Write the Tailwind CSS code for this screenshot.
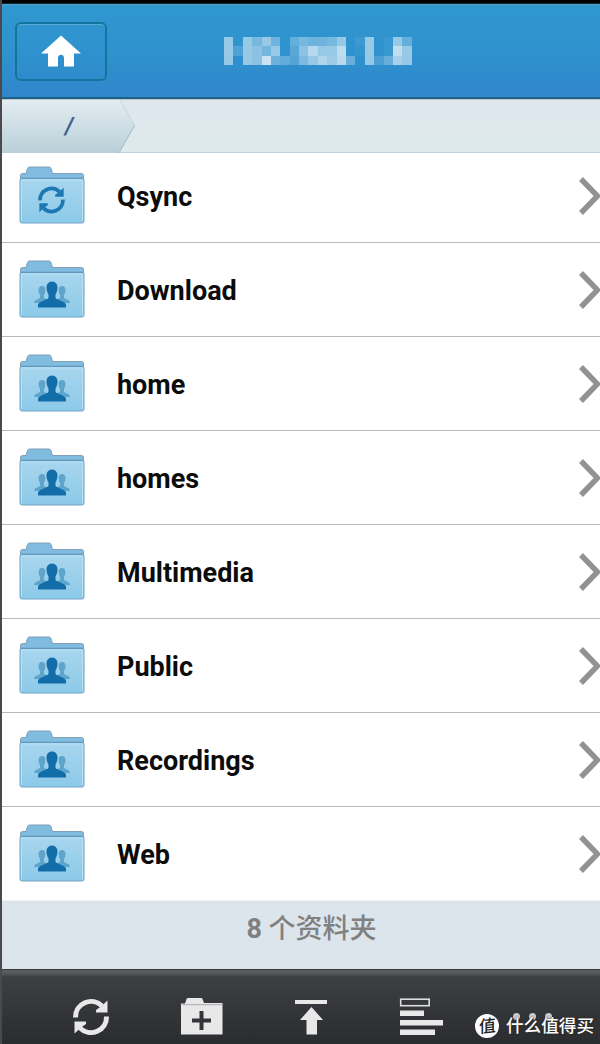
<!DOCTYPE html>
<html lang="zh-CN">
  <head>
    <meta charset="UTF-8" />
    <meta name="viewport" content="width=device-width, initial-scale=1.0" />
    <title>Files</title>
    <script src="https://cdn.jsdelivr.net/npm/@tailwindcss/browser@4"></script>
  </head>
  <body
    class="h-[1044px] w-[600px] overflow-hidden bg-[#4a4a4c] pl-[2px] font-['Roboto','Noto_Sans_CJK_SC',sans-serif]">
    <!-- Shared icon shapes -->
    <svg class="absolute h-0 w-0" aria-hidden="true">
      <defs>
        <linearGradient id="folder-front" x1="0" y1="0" x2="0" y2="1">
          <stop offset="0" stop-color="#a9d6ee" />
          <stop offset="1" stop-color="#8bcae9" />
        </linearGradient>
        <linearGradient id="crumb-fill" x1="0" y1="0" x2="0" y2="1">
          <stop offset="0" stop-color="#e2ecf0" />
          <stop offset="1" stop-color="#b9d0d9" />
        </linearGradient>
      </defs>
      <symbol id="folder" viewBox="0 0 66 58">
        <path
          d="M1.5 12V9.5Q1.5 7.5 3.5 7.5H7L8.5 2.5Q9 1 10.500 1H30Q31.500 1 32 2.500L33.500 7.500H62.500Q64.500 7.500 64.500 9.500V14H1.500Z"
          fill="#80bce0" stroke="#7f9fb8" stroke-width="1" />
        <rect x="1" y="12" width="64" height="45" rx="2" fill="url(#folder-front)" stroke="#74a4c4" />
        <path d="M2 12.500H64" stroke="#6198c0" stroke-width="1.200" />
        <path d="M2.500 55V14H63.500V55" fill="none" stroke="#b9dff2" stroke-width="1" />
      </symbol>
      <symbol id="people" viewBox="0 0 38 28">
        <g fill="#5fa4cb">
          <path d="M9 5C11.500 5 12.500 7 12.300 9.500C12.100 12 11.500 13 11 14V17L15 19V22H1L2 19.500L7 17V14C6 12.500 5.500 11 5.500 9.500C5.500 7 6.500 5 9 5Z" />
          <path d="M29 5C26.500 5 25.500 7 25.700 9.500C25.900 12 26.500 13 27 14V17L23 19V22H37L36 19.500L31 17V14C32 12.500 32.500 11 32.500 9.500C32.500 7 31.500 5 29 5Z" />
        </g>
        <path
          d="M19 0.500C22.700 0.500 24.700 3.500 24.500 7C24.300 10.500 23 12.500 22.500 13.500V17C24 19 31.500 20 33 23.500V26.500H5V23.500C6.500 20 14 19 15.500 17V13.500C15 12.500 13.700 10.500 13.500 7C13.300 3.500 15.300 0.500 19 0.500Z"
          fill="#136da8" />
      </symbol>
      <symbol id="sync" viewBox="0 0 38 38">
        <g fill="none" stroke="currentColor" stroke-width="5">
          <path d="M3.500 19.500A15.500 15.500 0 0 1 30 8" />
          <path d="M34.500 18.500A15.500 15.500 0 0 1 8 30" />
        </g>
        <path d="M35.500 2.500V14.500H24V12L29 8.500Z" fill="currentColor" />
        <path d="M2.500 35.500V23.500H14V26L9 29.500Z" fill="currentColor" />
      </symbol>
    </svg>

    <div class="flex h-full flex-col">
      <!-- Title bar -->
      <div class="h-1 shrink-0 border-b border-[#142d38] bg-black"></div>
      <header
        class="relative flex h-[95px] shrink-0 items-start border-t-2 border-b-2 border-t-[#4699c2] border-b-[#1a6587] bg-linear-to-b from-[#2f97cf] via-[#2f92ce] to-[#3086ca] pt-[16px] pl-[13px]">
        <button
          class="flex h-[59px] w-[92px] items-center justify-center rounded-md border-2 border-[#12759f] shadow-[inset_0_1px_0_#55a9d2]">
          <svg width="40" height="32" viewBox="0 0 40 32" class="-mt-px" fill="white">
            <path d="M20 0.500L40 18.500H33V31.500H23V23C23 18.800 17 18.800 17 23V31.500H7V18.500H0Z" />
          </svg>
        </button>
        <!-- Masked host name -->
        <svg id="host-mask" class="absolute top-[29px] left-[212px]" width="202" height="36" fill="white"></svg>
      </header>

      <!-- Breadcrumb -->
      <nav
        class="flex h-[54px] shrink-0 border-t border-b border-t-[#c0c5cb] border-b-[#bed4dd] bg-linear-to-b from-[#dfe6ee] to-[#deeaeb]">
        <div class="relative h-[53px] w-[134px]">
          <svg width="134" height="53" viewBox="0 0 134 53">
            <path d="M0 0H118L132.500 25.500L117 53H0Z" fill="url(#crumb-fill)" />
            <path d="M118 0L132.500 25.500" fill="none" stroke="#c7d5dc" />
            <path d="M132.500 25.500L117 53" fill="none" stroke="#9fb9c4" />
          </svg>
          <span
            class="absolute top-[11px] left-[63px] text-[23px] leading-8 font-bold text-[#3f6291] italic">/</span>
        </div>
      </nav>

      <!-- Folder list -->
      <main id="folder-list" class="h-[748px] shrink-0 bg-white"></main>

      <div
        class="flex h-[68px] shrink-0 justify-center bg-[#dde5ec] pt-[8px] pl-[21px] text-[27px] leading-[40px] font-bold text-[#808080]">
        <span>8 <span class="font-medium">个资料夹</span></span>
      </div>

      <!-- Toolbar -->
      <footer
        class="relative flex h-[75px] shrink-0 items-start border-t border-[#3a3b3d] bg-linear-to-b from-[#404144] to-[#2b2c30] pt-[28px] pl-[70px] text-[#e8e8e8] shadow-[inset_0_7px_3px_-2px_#5a5b5d]">
        <svg width="38" height="38"><use href="#sync" /></svg>
        <svg class="ml-[70px]" width="44" height="38" viewBox="0 0 44 38">
          <path d="M1 5.500H5L6.500 1Q7 0 8 0H21Q22 0 22.500 1L24 5H42.500V36.500H1Z" fill="#e8e8e8" />
          <path d="M2 6.700H42" stroke="#aaaaaa" />
          <path d="M21.500 13V32M12 22.500H31" stroke="#343538" stroke-width="4" />
        </svg>
        <svg class="ml-[70px]" width="34" height="38" viewBox="0 0 34 38" fill="#e8e8e8">
          <rect x="1" y="2" width="32" height="4" />
          <path d="M17.500 9L29 22H23V36.500H12.500V22H6Z" />
        </svg>
        <svg class="ml-[70px]" width="45" height="38" viewBox="0 0 45 38" fill="#e8e8e8">
          <rect x="2.700" y="1.200" width="28.500" height="6.500" fill="none" stroke="#dedede" stroke-width="1.600" />
          <rect x="2" y="12.500" width="24" height="5.500" />
          <rect x="2" y="22" width="43" height="5.500" />
          <rect x="2" y="31.500" width="35" height="5.500" />
        </svg>
        <div class="mt-[15px] ml-[70px] flex gap-[9px]">
          <i class="size-[7px] rounded-full bg-[#c9c9c9]"></i>
          <i class="size-[7px] rounded-full bg-[#c9c9c9]"></i>
          <i class="size-[7px] rounded-full bg-[#c9c9c9]"></i>
        </div>

        <!-- Watermark -->
        <div class="absolute top-[44px] left-[473px] flex items-center gap-[7px] text-white">
          <span
            class="flex size-6 items-center justify-center rounded-full bg-white text-[17px] leading-none font-medium text-[#222]"><span class="-skew-x-6 -rotate-6">值</span></span>
          <span
            class="text-[17.6px] leading-6 font-medium whitespace-nowrap [text-shadow:0_0_2px_#222,1px_1px_1px_#333]">什么值得买</span>
        </div>
      </footer>
    </div>

    <script>
      const folders = ["Qsync", "Download", "home", "homes", "Multimedia", "Public", "Recordings", "Web"];

      const syncIcon = `<svg class="absolute top-[20px] left-[18px] text-[#1b78b2]" width="29" height="28"><use href="#sync" /></svg>`;
      const peopleIcon = `<svg class="absolute top-[21px] left-[14px]" width="38" height="28"><use href="#people" /></svg>`;

      document.getElementById("folder-list").className += " flex flex-col justify-end overflow-hidden";
      document.getElementById("folder-list").innerHTML = folders
        .map(
          (name) => `
          <div class="flex h-[94px] shrink-0 items-center border-b border-[#b8b8b8] pl-[17px] first:h-[90px] first:pb-[4px] last:border-[#eef1f4]">
            <div class="relative mb-[2px] h-[58px] w-[66px]">
              <svg width="66" height="58"><use href="#folder" /></svg>
              ${name === "Qsync" ? syncIcon : peopleIcon}
            </div>
            <span class="mt-[2px] ml-[32px] flex-1 text-[27px] leading-8 font-bold text-[#0c0c0c]">${name}</span>
            <svg width="22" height="42" viewBox="0 0 22 42">
              <path d="M3 4L19.500 21L3 38" fill="none" stroke="#929292" stroke-width="5.500" />
            </svg>
          </div>`
        )
        .join("");

      // White opacity (percent) of each block in the masked host name
      const mask = [
        [50, 0, 50, 35, 50, 30, 0, 25, 35, 30, 30, 35, 50, 0, 7, 50, 0, 4, 50, 25],
        [50, 15, 50, 45, 33, 50, 0, 20, 45, 65, 50, 50, 68, 0, 3, 50, 0, 5, 70, 50],
        [50, 0, 50, 45, 75, 30, 25, 18, 38, 50, 62, 53, 66, 28, 0, 50, 14, 27, 58, 50],
      ];
      const cell = 9.385;
      document.getElementById("host-mask").innerHTML = mask
        .map((row, y) =>
          row
            .map(
              (a, x) =>
                `<rect x="${10 + x * cell}" y="${2 + y * cell}" width="${cell}" height="${cell}" opacity="${a / 100}" shape-rendering="crispEdges" />`
            )
            .join("")
        )
        .join("");
    </script>
  </body>
</html>
